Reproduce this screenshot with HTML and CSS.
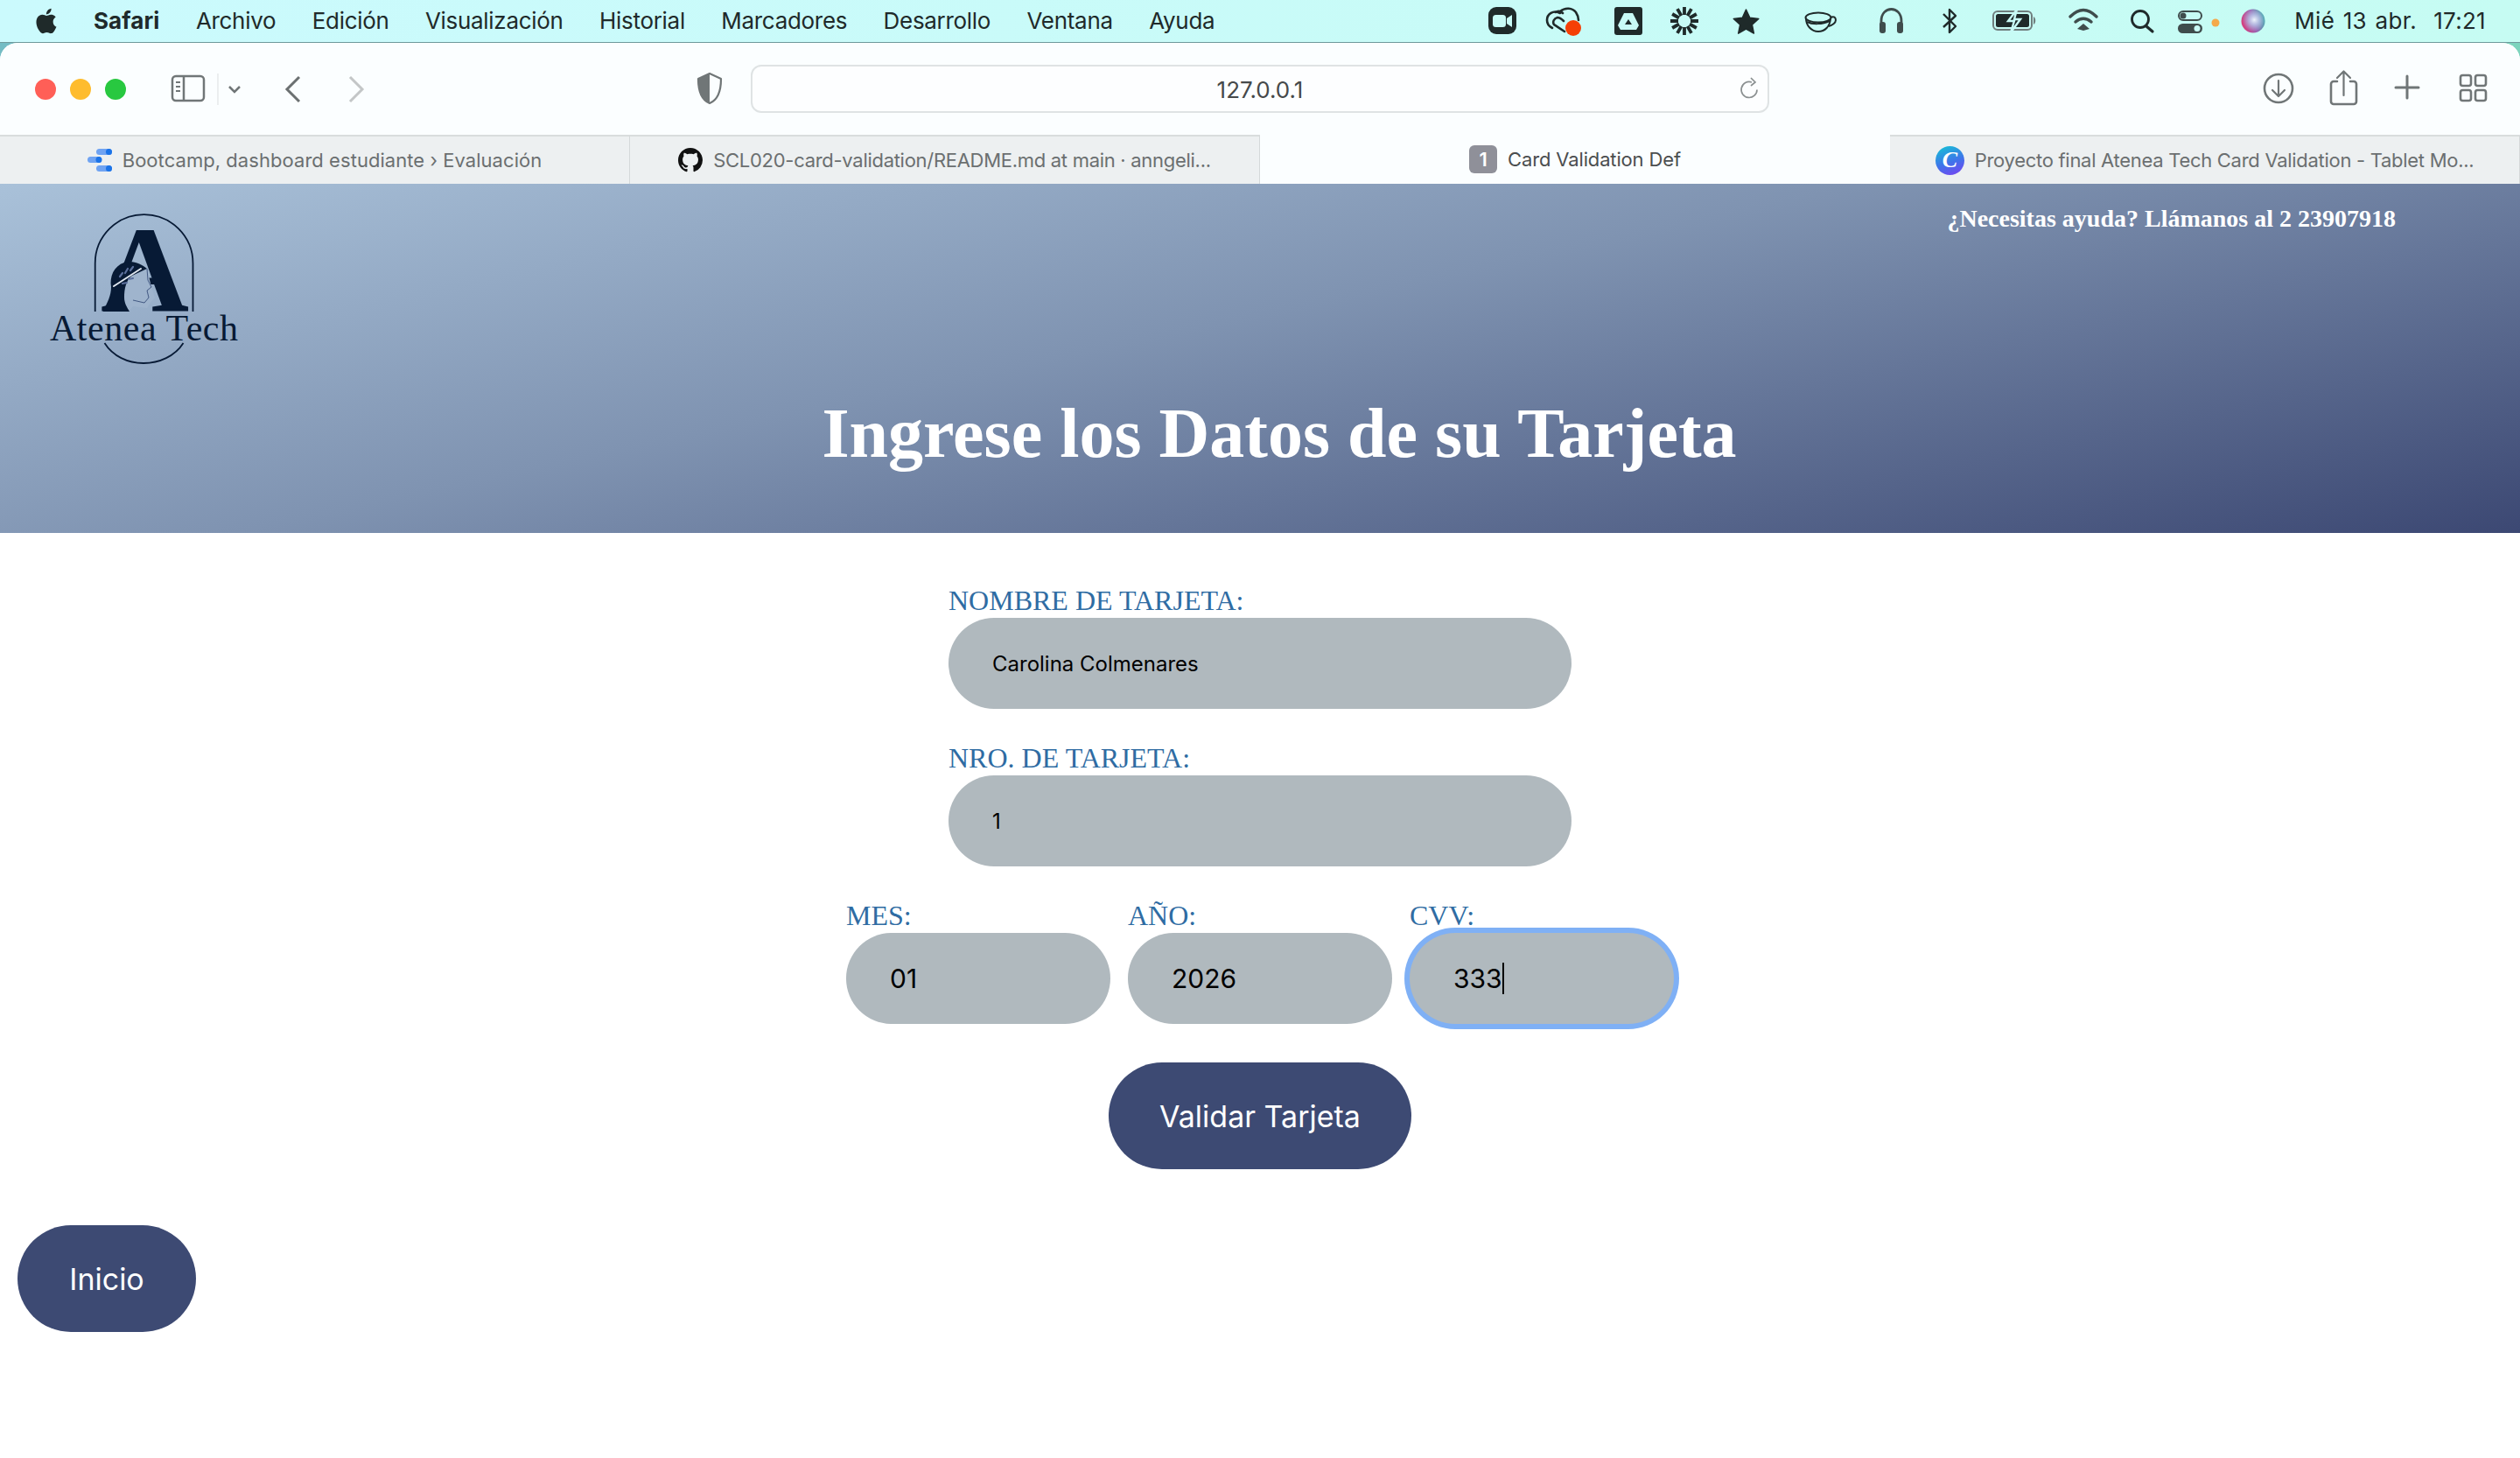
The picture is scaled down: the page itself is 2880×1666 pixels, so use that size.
FILE: index.html
```html
<!DOCTYPE html>
<html lang="es">
<head>
<meta charset="utf-8">
<title>Card Validation Def</title>
<link rel="stylesheet" href="styles.css">
</head>
<body>
<header class="menubar">
  <svg class="apple" viewBox="0 0 24 24"><path d="M18.71 19.5c-.83 1.24-1.71 2.45-3.05 2.47-1.34.03-1.77-.79-3.29-.79-1.53 0-2 .77-3.27.82-1.31.05-2.3-1.32-3.14-2.53C4.25 17 2.94 12.45 4.7 9.39c.87-1.52 2.43-2.48 4.12-2.51 1.28-.02 2.5.87 3.29.87.78 0 2.26-1.07 3.8-.91.65.03 2.47.26 3.64 1.98-.09.06-2.17 1.28-2.15 3.81.03 3.02 2.65 4.03 2.68 4.04-.03.07-.42 1.44-1.38 2.83M13 3.5c.73-.83 1.94-1.46 2.94-1.5.13 1.17-.34 2.35-1.04 3.19-.69.85-1.83 1.51-2.95 1.42-.15-1.15.41-2.35 1.05-3.11z"/></svg>
  <nav class="menus">
    <span class="menu-app">Safari</span><span>Archivo</span><span>Edición</span><span>Visualización</span><span>Historial</span><span>Marcadores</span><span>Desarrollo</span><span>Ventana</span><span>Ayuda</span>
  </nav>
  <svg class="status" viewBox="1700 0 900 48">
    <defs>
      <linearGradient id="siri-base" x1="0" y1="0.6" x2="1" y2="0.3">
        <stop offset="0" stop-color="#d93d7c"/><stop offset=".5" stop-color="#9a5fb0"/><stop offset="1" stop-color="#2fa7a5"/>
      </linearGradient>
      <radialGradient id="siri-core" cx="55%" cy="45%" r="50%">
        <stop offset="0" stop-color="#eef4fb"/><stop offset=".45" stop-color="#b9c8ea" stop-opacity=".8"/><stop offset="1" stop-color="#b9c8ea" stop-opacity="0"/>
      </radialGradient>
    </defs>
    <rect x="1700" y="8" width="32" height="31" rx="9" fill="#1f2a2a"/>
    <rect x="1705" y="17" width="15" height="14" rx="3.5" fill="#c8faf6"/>
    <path d="M1721 21l6-4v14l-6-4z" fill="#c8faf6"/>
    <g fill="none" stroke="#1f2a2a" stroke-width="2.6" stroke-linecap="round">
      <path d="M1782 15c-8-4-15 1-15 8 0 4 2 7 6 9"/>
      <path d="M1782 13c6-5 14-4 18 1 2 3 3 5 3 9"/>
      <path d="M1787 36l-12-8c-2-3 0-7 4-8 3 0 5 2 7 4"/>
      <path d="M1777 14c3-2 6-1 8 1"/>
    </g>
    <circle cx="1797" cy="32" r="9" fill="#f53f05"/>
    <rect x="1844" y="8" width="32" height="32" rx="3" fill="#1f2a2a"/>
    <path d="M1855 15h10l7 14-3 5h-18l-3-5z" fill="#c8faf6"/>
    <path d="M1860 22l4 6h-8z" fill="#1f2a2a"/>
    <path d="M1931 24h9M1917 24h-9M1924 31v9M1924 17V8M1930.060 27.500l7.800 4.500M1917.940 20.500l-7.800-4.500M1930.060 20.500l7.800-4.500M1917.940 27.500l-7.800 4.500M1927.500 30.060l4.500 7.800M1920.500 17.940l-4.500-7.800M1927.500 17.940l4.500-7.800M1920.500 30.060l-4.500 7.800" stroke="#1f2a2a" stroke-width="3.800" fill="none"/>
    <path d="M1994.500 11l4.300 9.200 10 1.200-7.400 6.800 2 9.900-8.900-5-8.800 5 2-9.900-7.400-6.800 10-1.200z" fill="#1f2a2a" stroke="#1f2a2a" stroke-width="1.500" stroke-linejoin="round"/>
    <g fill="none" stroke="#1f2a2a" stroke-width="2">
      <ellipse cx="2077" cy="20" rx="14.500" ry="5.500"/>
      <path d="M2063 21c0 8 6 15 14 15s13-6 14-14"/>
      <path d="M2091 20c4-2 6 0 6 3s-4 6-8 7"/>
      <path d="M2064 25c6 3 18 3 26-1"/>
    </g>
    <path d="M2149 35V24c0-18 23-18 23 0v11" fill="none" stroke="#3f4c4c" stroke-width="2.800"/>
    <rect x="2147" y="25" width="7" height="13" rx="3" fill="#3f4c4c"/>
    <rect x="2167" y="25" width="7" height="13" rx="3" fill="#3f4c4c"/>
    <path d="M2220 16l14 14-7 7V11l7 7-14 13" fill="none" stroke="#1f2a2a" stroke-width="2.400" stroke-linejoin="round"/>
    <rect x="2277" y="13" width="44" height="21" rx="5" fill="none" stroke="#6f7d7d" stroke-width="2"/>
    <rect x="2280" y="16" width="38" height="15" rx="2.500" fill="#1f2a2a"/>
    <path d="M2323 19c3 1 3 8 0 9z" fill="#6f7d7d"/>
    <path d="M2304 11l-10 13h7l-4 13 11-15h-7z" fill="#1f2a2a" stroke="#c8faf6" stroke-width="2.400"/>
    <g fill="none" stroke="#3f4c4c" stroke-width="3.500" stroke-linecap="round">
      <path d="M2365 19c10-10 20-10 30 0"/>
      <path d="M2371 25c6-5 12-5 18 0"/>
    </g>
    <path d="M2380 27l7 6-7 2-7-2z" fill="#3f4c4c"/>
    <circle cx="2445" cy="22" r="9.500" fill="none" stroke="#1f2a2a" stroke-width="2.800"/>
    <path d="M2452 30l7 6" stroke="#1f2a2a" stroke-width="3.200" stroke-linecap="round"/>
    <rect x="2489" y="13" width="26" height="10" rx="5" fill="none" stroke="#3f4c4c" stroke-width="2"/>
    <circle cx="2494" cy="18" r="3.500" fill="#3f4c4c"/>
    <rect x="2488" y="27" width="28" height="11" rx="5.500" fill="#3f4c4c"/>
    <circle cx="2510" cy="32.500" r="3.500" fill="#c8faf6"/>
    <circle cx="2531" cy="26" r="4.500" fill="#f5a94a"/>
    <circle cx="2574" cy="24" r="13.500" fill="url(#siri-base)"/>
    <circle cx="2574" cy="24" r="13.500" fill="url(#siri-core)"/>
  </svg>
  <time class="clock">Mié 13 abr.&nbsp; 17:21</time>
</header>

<div class="window">
  <div class="toolbar">
    <svg class="tb-left" viewBox="0 0 840 105">
      <circle cx="52" cy="53" r="12" fill="#ff5f57"/>
      <circle cx="92" cy="53" r="12" fill="#febc2e"/>
      <circle cx="132" cy="53" r="12" fill="#28c840"/>
      <g fill="none" stroke="#707677" stroke-width="2.500">
        <rect x="197" y="38" width="36" height="28" rx="4"/>
        <path d="M210 38v28"/>
      </g>
      <path d="M201 45h5M201 50h5M201 55h5" stroke="#707677" stroke-width="2"/>
      <path d="M249 35v36" stroke="#e6e9ea" stroke-width="1.500"/>
      <path d="M262 50l6 6 6-6" fill="none" stroke="#707677" stroke-width="2.500"/>
      <path d="M342 39l-14 14 14 14" fill="none" stroke="#6b7071" stroke-width="3"/>
      <path d="M400 39l14 14-14 14" fill="none" stroke="#c3c6c7" stroke-width="3"/>
      <path d="M811 35l13 6c0 14-3 24-13 28-10-4-13-14-13-28z" fill="none" stroke="#707677" stroke-width="2.200" stroke-linejoin="round"/>
      <path d="M811 35l-13 6c0 14 3 24 13 28z" fill="#707677"/>
    </svg>
    <div class="address">
      <span class="url">127.0.0.1</span>
      <svg class="reload" viewBox="0 0 24 30"><path d="M15 7a9 9 0 1 0 6 8.500M14 2l5 5-5 4" fill="none" stroke="#8b9091" stroke-width="1.700"/></svg>
    </div>
    <svg class="tb-right" viewBox="2022 0 858 105">
      <g fill="none" stroke="#707677" stroke-width="2.600" stroke-linecap="round" stroke-linejoin="round">
        <circle cx="2604" cy="52" r="16"/>
        <path d="M2604 43v17M2597 54l7 7 7-7" stroke-width="2.200"/>
        <path d="M2671 44h-4a3 3 0 0 0-3 3v20a3 3 0 0 0 3 3h23a3 3 0 0 0 3-3V47a3 3 0 0 0-3-3h-4"/>
        <path d="M2678.500 33v27M2671 40l7.500-7.500 7.500 7.500" stroke-width="2.200"/>
        <path d="M2751 38v25M2738 51h26" stroke-width="3"/>
        <rect x="2812" y="37" width="12" height="12" rx="2.500"/>
        <rect x="2829" y="37" width="12" height="12" rx="2.500"/>
        <rect x="2812" y="54" width="12" height="12" rx="2.500"/>
        <rect x="2829" y="54" width="12" height="12" rx="2.500"/>
      </g>
    </svg>
  </div>

  <div class="tabs">
    <div class="tab tab-loose">
      <svg class="fav" viewBox="0 0 28 28"><g fill="#6fa3f2"><rect x="10" y="1" width="18" height="7" rx="3.500"/><rect x="0" y="10" width="16" height="7" rx="3.500"/><rect x="10" y="20" width="18" height="7" rx="3.500"/></g><g fill="#1a73e8"><circle cx="24.500" cy="4.500" r="3.500"/><circle cx="13" cy="13.500" r="3.500"/><circle cx="24.500" cy="23.500" r="3.500"/></g></svg>
      <span>Bootcamp, dashboard estudiante › Evaluación</span>
    </div>
    <div class="tab tab-tight">
      <svg class="fav" viewBox="0 0 16 16"><path fill="#111" d="M8 0C3.58 0 0 3.58 0 8c0 3.54 2.29 6.530 5.470 7.590.4.070.55-.17.55-.38 0-.19-.01-.82-.01-1.490-2.010.37-2.530-.49-2.690-.94-.09-.23-.48-.94-.82-1.130-.28-.15-.68-.52-.01-.53.63-.01 1.080.58 1.230.82.72 1.210 1.870.87 2.330.66.070-.52.28-.87.51-1.070-1.780-.2-3.640-.89-3.640-3.950 0-.87.31-1.590.82-2.150-.08-.2-.36-1.020.08-2.120 0 0 .67-.21 2.200.82.64-.18 1.320-.27 2-.27.68 0 1.360.09 2 .27 1.530-1.040 2.200-.82 2.200-.82.44 1.100.16 1.920.08 2.120.51.56.82 1.270.82 2.150 0 3.070-1.870 3.750-3.650 3.950.29.25.54.73.54 1.480 0 1.070-.01 1.930-.01 2.200 0 .21.15.46.55.38A8.013 8.013 0 0 0 16 8c0-4.420-3.580-8-8-8z"/></svg>
      <span>SCL020-card-validation/README.md at main · anngeli...</span>
    </div>
    <div class="tab tab-active">
      <span class="tab-badge">1</span>
      <span>Card Validation Def</span>
    </div>
    <div class="tab tab-tight">
      <span class="canva">C</span>
      <span>Proyecto final Atenea Tech Card Validation - Tablet Mo...</span>
    </div>
  </div>

  <main class="page">
    <section class="hero">
      <svg class="logo" viewBox="0 0 270 210" role="img" aria-label="Atenea Tech">
        <path d="M78.700 136V81A55.900 55.900 0 0 1 190.500 81V136" fill="none" stroke="#071a35" stroke-width="1.800"/>
        <text class="logo-a" x="85" y="135.500">A</text>
        <path d="M114 84L138 87 143 108 147 120 141 127 138 132 122 130 117 136 104 136 112 100z" fill="#9fb4cd"/>
        <path d="M87.500 136C93 125 97 118 97 108 95 96 100 84 112 80 122 77 132 82 138 87L121 95C114 100 112 110 112 120 112 126 115 131 118 136z" fill="#071a35"/>
        <path d="M100 107L131 87" stroke="#dfe6ef" stroke-width="2" stroke-linecap="round"/>
        <path d="M107 96l3-4M113 92l3-5M119 89l3-4M110 104l5-1M117 99l5-1" stroke="#5b6f9c" stroke-width="2.200" stroke-linecap="round"/>
        <path d="M138 87L139 100 143 108 138 112 140 120 135 126 122 123" fill="none" stroke="#29406e" stroke-width=".8"/>
        <text class="logo-name" x="27" y="169" textLength="215" lengthAdjust="spacing">Atenea Tech</text>
        <path d="M89.500 172C99 187 116 195 134 195 152 195 170 187 179.500 172" fill="none" stroke="#071a35" stroke-width="1.800"/>
      </svg>
      <p class="help">¿Necesitas ayuda? Llámanos al 2 23907918</p>
      <h1 class="title">Ingrese los Datos de su Tarjeta</h1>
    </section>

    <form class="card-form">
      <div class="field field-wide">
        <label for="nombre">NOMBRE DE TARJETA:</label>
        <input id="nombre" class="input" type="text" value="Carolina Colmenares">
      </div>
      <div class="field field-wide">
        <label for="numero">NRO. DE TARJETA:</label>
        <input id="numero" class="input" type="text" value="1">
      </div>
      <div class="field-row">
        <div class="field">
          <label for="mes">MES:</label>
          <input id="mes" class="input input-lg" type="text" value="01">
        </div>
        <div class="field">
          <label for="anio">AÑO:</label>
          <input id="anio" class="input input-lg" type="text" value="2026">
        </div>
        <div class="field field-focus">
          <label for="cvv">CVV:</label>
          <input id="cvv" class="input input-lg input-focus" type="text" value="333">
          <span class="caret"></span>
        </div>
      </div>
      <button class="pill pill-validate" type="button">Validar Tarjeta</button>
    </form>

    <div class="home-row">
      <button class="pill pill-home" type="button">Inicio</button>
    </div>
  </main>
</div>
</body>
</html>
```

FILE: styles.css
```css
* { box-sizing: border-box; }
html, body { margin: 0; padding: 0; }
body {
  width: 2880px;
  height: 1666px;
  overflow: hidden;
  background: linear-gradient(90deg, #74bcc4 0%, #7cd4bd 100%);
  font-family: Inter, "Noto Sans", sans-serif;
}

/* macOS menu bar */
.menubar {
  height: 49px;
  display: flex;
  align-items: center;
  padding-right: 39px;
  background: linear-gradient(90deg, #cbfafd 0%, #c6fcf3 100%);
  color: #1f2a2a;
  font-size: 26px;
  border-bottom: 1px solid #6f9a9c;
}
.apple { width: 34px; height: 36px; margin-left: 36px; fill: #1f2a2a; flex: none; }
.menus { display: flex; gap: 41.4px; margin-left: 37px; padding-bottom: 2px; white-space: nowrap; letter-spacing: -.3px; flex: none; }
.menu-app { font-weight: 700; letter-spacing: .1px; }
.status { width: 900px; height: 48px; flex: none; margin-left: auto; }
.clock { margin-left: 21px; padding-bottom: 2px; white-space: nowrap; letter-spacing: .3px; word-spacing: 2px; flex: none; }

/* Safari window */
.window {
  height: 1617px;
  border-radius: 20px 20px 0 0;
  overflow: hidden;
  background: #fff;
}
.toolbar { height: 105px; display: flex; align-items: center; background: #fbfeff; }
.tb-left { width: 840px; height: 105px; flex: none; }
.address {
  width: 1164px;
  height: 55px;
  margin-left: 18px;
  flex: none;
  display: flex;
  align-items: center;
  justify-content: center;
  position: relative;
  border: 2px solid #dfe3e4;
  border-radius: 12px;
  background: #fdfeff;
}
.url { font-size: 26px; color: #46494a; padding-top: 2px; }
.reload { position: absolute; right: 9px; top: 11px; width: 24px; height: 30px; }
.tb-right { width: 858px; height: 105px; flex: none; }

.tabs { height: 56px; display: grid; grid-template-columns: 720px 720px 720px 720px; background: #edf0f1; }
.tab {
  display: flex;
  align-items: center;
  justify-content: center;
  gap: 12px;
  font-size: 22px;
  letter-spacing: -.15px;
  color: #6b6f70;
  white-space: nowrap;
  border-top: 2px solid #d9dddd;
  border-right: 1px solid #d5d9da;
}
.tab-loose { letter-spacing: .05px; }
.tab-tight { letter-spacing: -.29px; }
.tab-active { background: #fbfeff; border-top: 0; border-right: 0; color: #4b4e4f; }
.fav { width: 28px; height: 28px; flex: none; }
.tab-badge {
  width: 32px; height: 32px;
  border-radius: 6px;
  background: #8f9099;
  color: #fff;
  font-size: 22px;
  font-weight: 600;
  display: flex; align-items: center; justify-content: center;
}
.canva {
  width: 33px; height: 33px;
  border-radius: 50%;
  background: linear-gradient(160deg, #12c6d4 0%, #3f73ea 55%, #7b3ff2 100%);
  color: #fff;
  font: italic 700 26px "Liberation Serif", serif;
  display: flex; align-items: center; justify-content: center;
}

/* page */
.page { height: 1456px; background: #fff; }
.hero {
  height: 399px;
  display: grid;
  grid-template-columns: 270px 1fr;
  grid-template-rows: 210px 1fr;
  padding-left: 30px;
  color: #fff;
  font-family: "Liberation Serif", "Times New Roman", serif;
  background: linear-gradient(168deg, #a9c1d9 0%, #7f93b1 45%, #3c4873 100%);
}
.logo { width: 270px; height: 210px; margin-top: 10px; }
.logo-a { font: 700 140px "Liberation Serif", serif; fill: #071a35; }
.logo-name { font: 400 42px "Liberation Serif", serif; fill: #071a35; }
.help { margin: 22px 142px 0 0; text-align: right; font-size: 28px; font-weight: 700; line-height: 36px; }
.title {
  grid-column: 1 / -1;
  margin: 27px 0 0;
  padding-left: 14px;
  text-align: center;
  font-size: 80px;
  font-weight: 700;
  line-height: 96px;
}

.card-form { display: flex; flex-direction: column; align-items: center; padding-top: 61px; }
.field { display: flex; flex-direction: column; position: relative; }
.field-wide { width: 712px; margin-bottom: 40px; }
.field label {
  height: 36px;
  font: 400 32px/33px "Liberation Serif", "Times New Roman", serif;
  color: #2f6ca3;
  white-space: nowrap;
}
.input {
  width: 100%;
  height: 104px;
  border: 0;
  outline: 0;
  padding: 0 20px 0 50px;
  border-radius: 52px;
  background: #b0b9be;
  color: #000;
  font: 400 24px Inter, sans-serif;
}
.input-lg { font-size: 30px; }
.input-focus { box-shadow: 0 0 0 6px #7fb0f5; }
.caret { position: absolute; left: 106px; top: 70px; width: 2px; height: 36px; background: #000; }
.field-row { display: grid; grid-template-columns: repeat(3, 302px); gap: 20px; }
.pill {
  border: 0;
  height: 122px;
  border-radius: 61px;
  background: #3d4a73;
  color: #fff;
  font: 400 34px Inter, sans-serif;
}
.pill-validate { width: 346px; margin-top: 44px; }
.home-row { padding: 64px 0 0 20px; }
.pill-home { width: 204px; }
```
